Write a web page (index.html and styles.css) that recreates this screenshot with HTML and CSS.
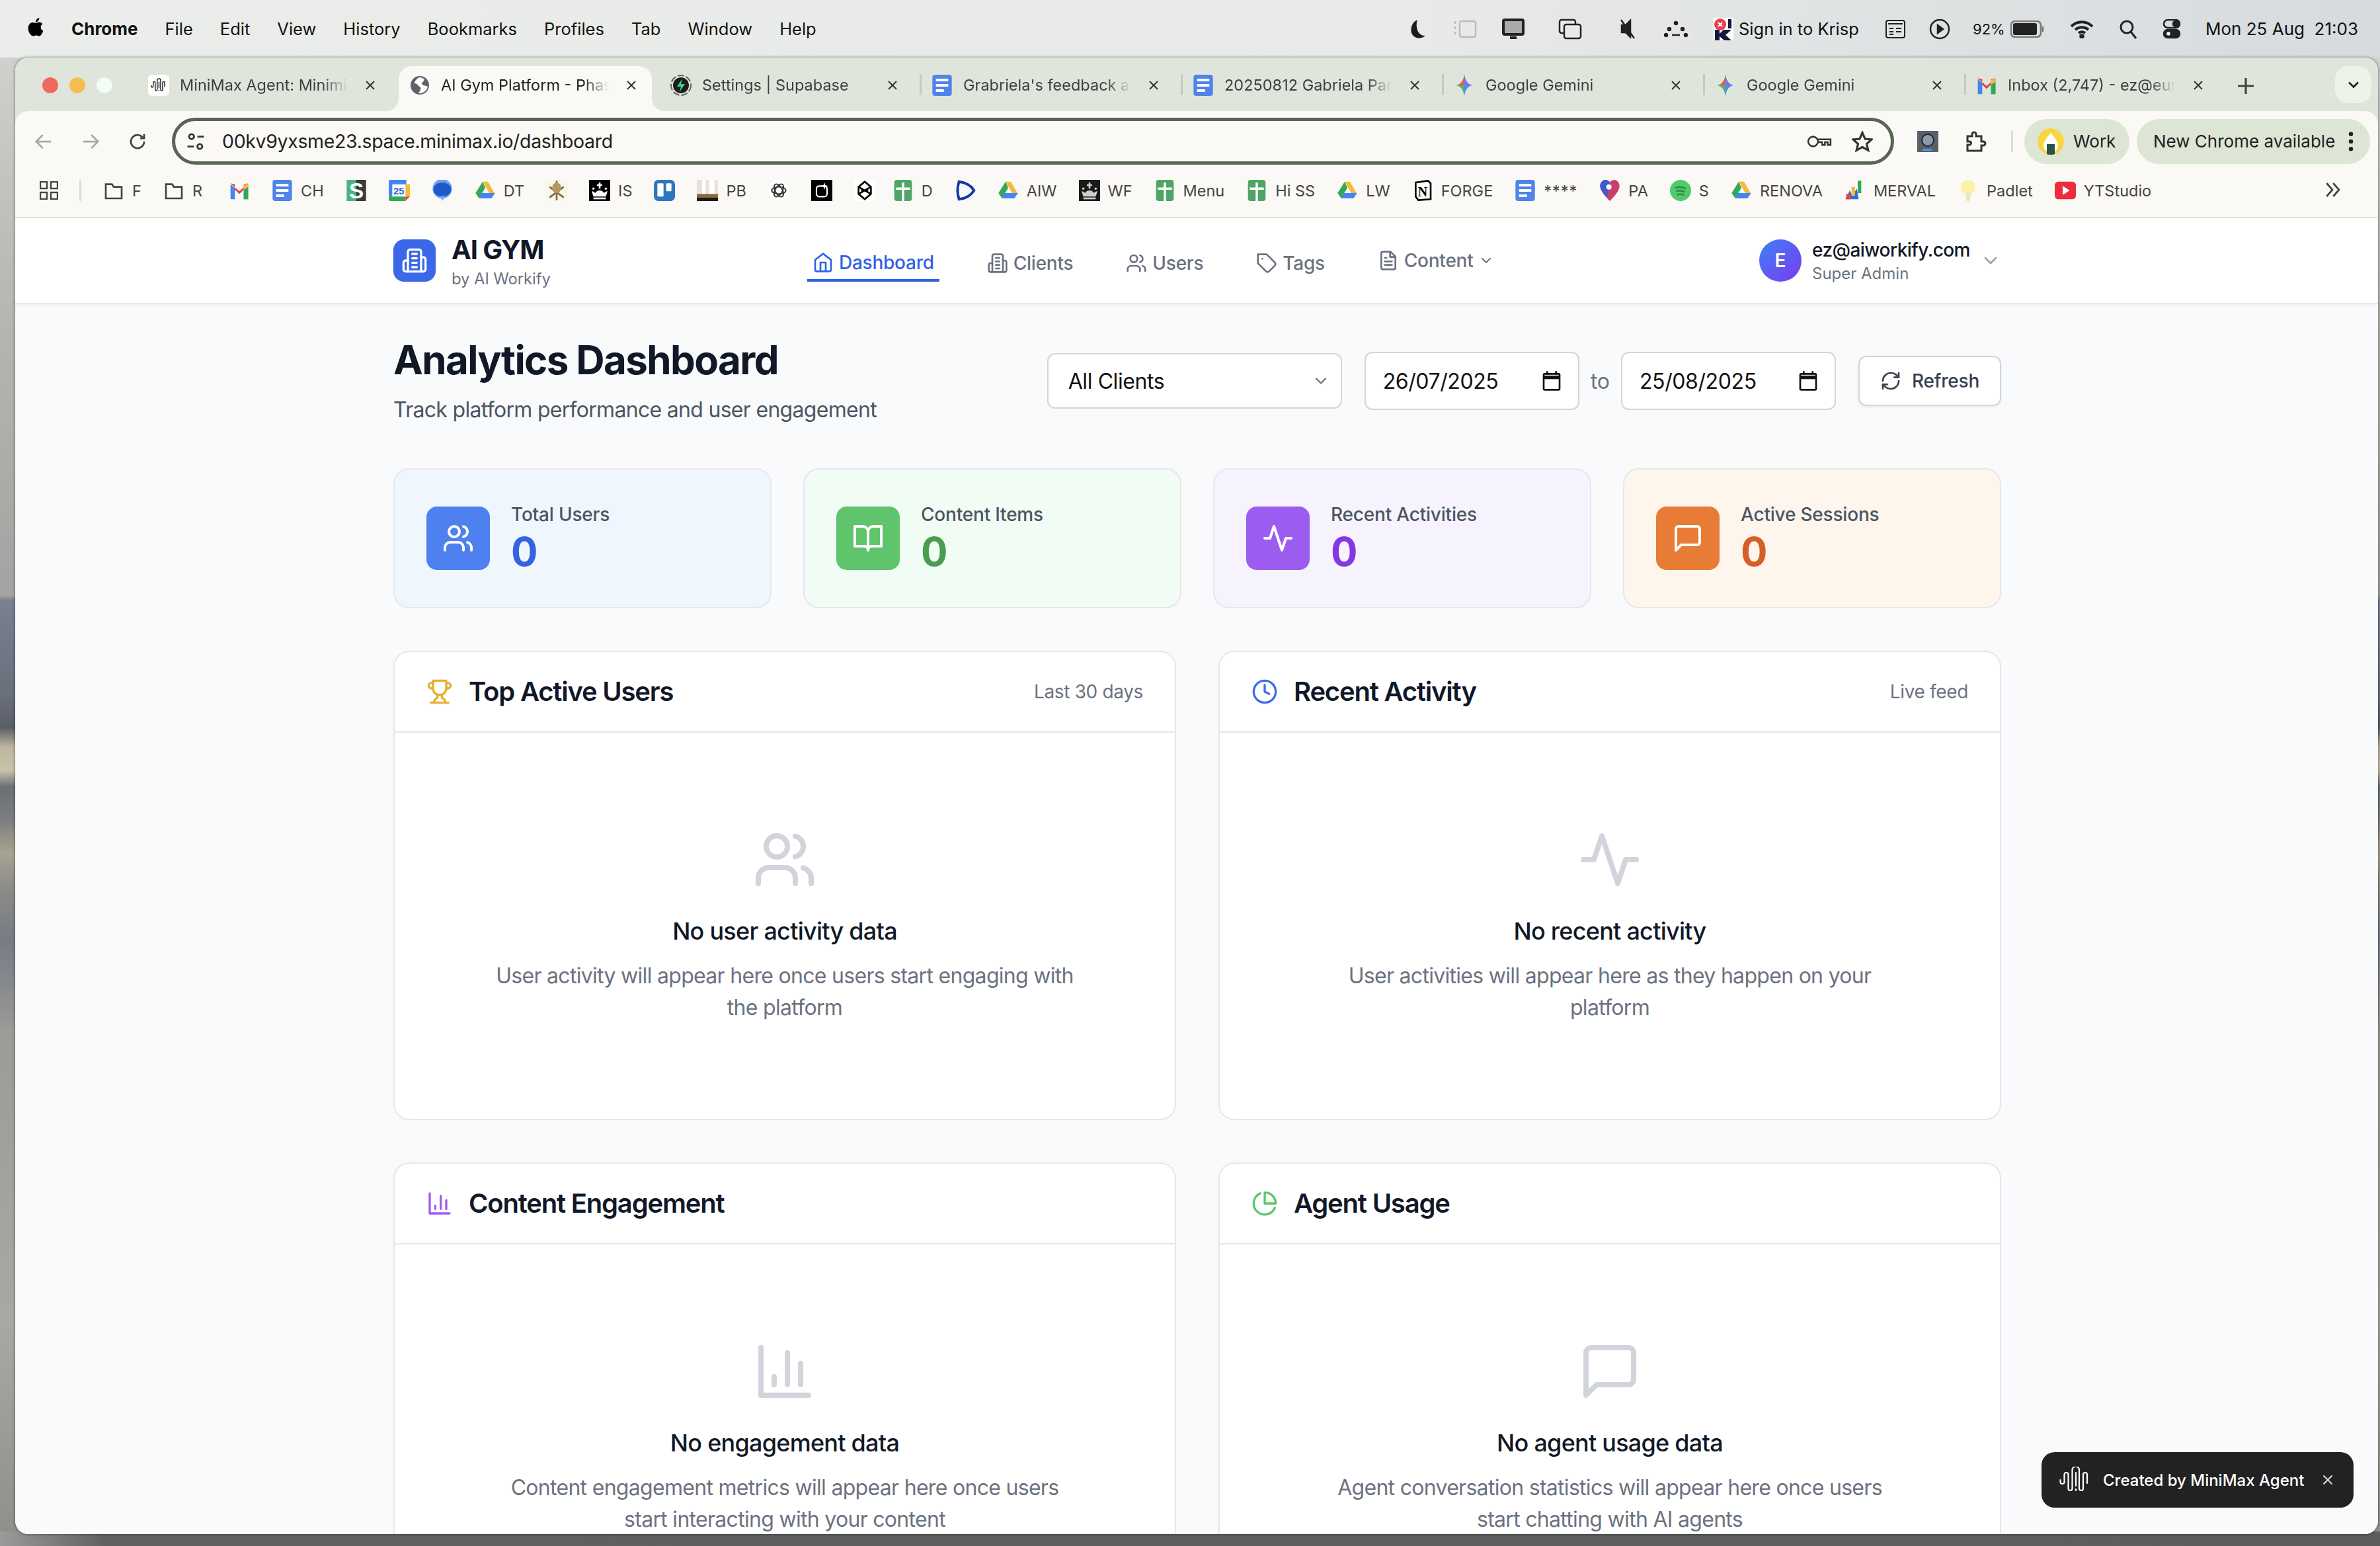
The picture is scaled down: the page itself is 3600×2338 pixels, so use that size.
FILE: index.html
```html
<!DOCTYPE html>
<html lang="en">
<head>
<meta charset="utf-8">
<title>AI Gym Platform</title>
<link rel="stylesheet" href="styles.css">
</head>
<body>
<svg class="sprite" width="0" height="0" aria-hidden="true">
  <defs>
    <g id="i-users"><path d="M16 21v-2a4 4 0 0 0-4-4H6a4 4 0 0 0-4 4v2"/><circle cx="9" cy="7" r="4"/><path d="M22 21v-2a4 4 0 0 0-3-3.87"/><path d="M16 3.13a4 4 0 0 1 0 7.75"/></g>
    <g id="i-book"><path d="M2 3h6a4 4 0 0 1 4 4v14a3 3 0 0 0-3-3H2z"/><path d="M22 3h-6a4 4 0 0 0-4 4v14a3 3 0 0 1 3-3h7z"/></g>
    <g id="i-activity"><path d="M22 12h-4l-3 9L9 3l-3 9H2"/></g>
    <g id="i-chat"><path d="M21 15a2 2 0 0 1-2 2H7l-4 4V5a2 2 0 0 1 2-2h14a2 2 0 0 1 2 2z"/></g>
    <g id="i-building"><path d="M6 22V4a2 2 0 0 1 2-2h8a2 2 0 0 1 2 2v18Z"/><path d="M6 12H4a2 2 0 0 0-2 2v6a2 2 0 0 0 2 2h2"/><path d="M18 9h2a2 2 0 0 1 2 2v9a2 2 0 0 1-2 2h-2"/><path d="M10 6h4M10 10h4M10 14h4M10 18h4"/></g>
    <g id="i-home"><path d="m3 9 9-7 9 7v11a2 2 0 0 1-2 2H5a2 2 0 0 1-2-2z"/><path d="M9 22V12h6v10"/></g>
    <g id="i-tag"><path d="M12 2H2v10l9.29 9.29c.94.94 2.48.94 3.42 0l6.58-6.58c.94-.94.94-2.48 0-3.42L12 2Z"/><path d="M7 7h.01"/></g>
    <g id="i-file"><path d="M14.5 2H6a2 2 0 0 0-2 2v16a2 2 0 0 0 2 2h12a2 2 0 0 0 2-2V7.5L14.5 2z"/><path d="M14 2v6h6"/><path d="M16 13H8M16 17H8M10 9H8"/></g>
    <g id="i-chev"><path d="m6 9 6 6 6-6"/></g>
    <g id="i-refresh"><path d="M3 12a9 9 0 0 1 9-9 9.75 9.75 0 0 1 6.74 2.74L21 8"/><path d="M21 3v5h-5"/><path d="M21 12a9 9 0 0 1-9 9 9.75 9.75 0 0 1-6.74-2.74L3 16"/><path d="M8 16H3v5"/></g>
    <g id="i-trophy"><path d="M6 9H4.5a2.5 2.5 0 0 1 0-5H6"/><path d="M18 9h1.5a2.5 2.5 0 0 0 0-5H18"/><path d="M4 22h16"/><path d="M10 14.66V17c0 .55-.47.98-.97 1.21C7.85 18.75 7 20.24 7 22"/><path d="M14 14.66V17c0 .55.47.98.97 1.21C16.15 18.75 17 20.24 17 22"/><path d="M18 2H6v7a6 6 0 0 0 12 0V2Z"/></g>
    <g id="i-clock"><circle cx="12" cy="12" r="10"/><path d="M12 6v6l4 2"/></g>
    <g id="i-bars"><path d="M3 3v18h18"/><path d="M18 17V9M13 17V5M8 17v-3"/></g>
    <g id="i-pie"><path d="M21.21 15.89A10 10 0 1 1 8 2.83"/><path d="M22 12A10 10 0 0 0 12 2v10z"/></g>
    <g id="i-x"><path d="M18 6 6 18M6 6l12 12"/></g>
    <g id="i-wave"><path d="M1.500 20v3a3 3 0 0 0 6 0V12a3 3 0 0 1 6 0v21a3 3 0 0 0 6 0V5a5.250 5.250 0 0 1 10.500 0v28a3 3 0 0 0 6 0V12a3 3 0 0 1 6 0v13"/><path d="M25 9v20M25 34v2"/></g>
    <g id="i-folder"><path d="M3 5h7l2 3h9v13H3z"/></g>
    <g id="b-docs"><rect x="1" y="0" width="22" height="24" rx="3" fill="#5083ec"/><path d="M5 6h14M5 12h14M5 18h9" stroke="#fff" stroke-width="3"/></g>
    <g id="b-sheet"><rect x="2" y="0" width="20" height="24" rx="3" fill="#4fa566"/><path d="M12 3v21M4 10h16" stroke="#fff" stroke-width="2.6"/></g>
    <g id="b-drive"><path d="M9 2h6l8 14h-6z" fill="#f6b93b"/><path d="M9 2l3 7-7 12-4-6z" fill="#34a853"/><path d="M5 21l3-6h15l-4 6z" fill="#4285f4"/></g>
    <g id="b-gmail"><path d="M2 5l10 8 10-8v17h-5V11l-5 5-5-5v11H2z" fill="#4285f4"/><path d="M7 11l5 5 5-5V5l5-1-10 9L2 4l5 1z" fill="#ea4335"/><path d="M17 11V6l5-2v5z" fill="#f6b93b"/><path d="M17 12l5-4v14h-5z" fill="#34a853"/></g>
    <g id="b-gem"><path d="M12 0c1 7 4 11 9 12-5 1-8 5-9 12-1-7-4-11-9-12 5-1 8-5 9-12z" fill="#4d8cf5"/><path d="M12 0c-1 7-4 11-9 12h9z" fill="#ea5a47"/><path d="M3 12c5 1 8 5 9 12V12z" fill="#53b66b"/><path d="M12 0c1 7 4 11 9 12h-9z" fill="#7a74f0"/></g>
    <g id="b-crown"><path d="M11 3h2v2h2v2h-2v3h-2V7H9V5h2z"/><circle cx="5" cy="10" r="1.300"/><circle cx="19" cy="10" r="1.300"/><path d="M3 13c2 0 3 1 4 2 1-2 3-3 5-3s4 1 5 3c1-1 2-2 4-2l-2 6H5z"/><rect x="5" y="20" width="14" height="2"/></g>
  </defs>
</svg>

<div class="menubar">
  <svg class="apple" viewBox="0 0 24 28"><path d="M17 1c0 3-2 5.500-5 6 0-3 2-5.500 5-6zM12.300 8c1.500 0 2.800-1 4.700-1 2 0 3.700 1 4.700 2.600-4 2.400-3.300 8 .8 9.600-1.200 3.400-3.400 7.300-5.700 7.300-1.600 0-2.200-1-4.100-1-2 0-2.600 1-4.100 1C5 26.500 1.500 20.500 1.500 15.500c0-4.800 3-8 6.300-8 1.800 0 3.200 1 4.500.5z"/></svg>
  <nav class="menus">
    <b>Chrome</b><span>File</span><span>Edit</span><span>View</span><span>History</span><span>Bookmarks</span><span>Profiles</span><span>Tab</span><span>Window</span><span>Help</span>
  </nav>
  <div class="tray">
    <svg class="t t-moon" viewBox="0 0 24 28"><path d="M13 1C3 5 1 20 9 25c5 3 11 2 15-2C15 25 9 12 13 1z"/></svg>
    <svg class="t t-side" viewBox="0 0 36 28"><rect x="10" y="2" width="24" height="24" rx="3"/><path d="M3 2v24" stroke-dasharray="4 4"/></svg>
    <svg class="t t-mon" viewBox="0 0 34 32"><rect x="2" y="2" width="30" height="22" rx="2"/><path d="M12 29h10"/></svg>
    <svg class="t t-copy" viewBox="0 0 36 32"><rect x="2" y="2" width="24" height="20" rx="3"/><rect x="9" y="9" width="25" height="21" rx="3"/></svg>
    <svg class="t t-mute" viewBox="0 0 28 32"><path d="M5 10h6l7-7v25l-7-7H5z" fill="#222"/><path d="M4 2l20 28"/></svg>
    <svg class="t t-dots" viewBox="0 0 36 26"><circle cx="18" cy="4" r="2" fill="#222"/><circle cx="8" cy="13" r="2" fill="#222"/><circle cx="28" cy="13" r="2" fill="#222"/><circle cx="3" cy="22" r="2" fill="#222"/><circle cx="33" cy="22" r="2" fill="#222"/><path d="M12 22h12"/></svg>
    <svg class="t t-krisp" viewBox="0 0 30 34"><rect width="30" height="34" fill="#fff"/><path d="M2 34V18h7v6l6-6h12l-9 8 9 8H16l-7-6v6z" fill="#12183a"/><circle cx="10" cy="10" r="9" fill="#e5404d"/><path d="M7 7l6 6M13 7l-6 6" stroke="#fff" stroke-width="2"/><path d="M22 2h5v14h-5z" fill="#12183a"/></svg>
    <span class="krisp">Sign in to Krisp</span>
    <svg class="t t-kbd" viewBox="0 0 30 28"><rect x="1" y="1" width="28" height="26" rx="3"/><path d="M4 6h22M6 13h6M6 18h6M6 22h6M16 13h8M16 18h8"/></svg>
    <svg class="t t-play" viewBox="0 0 32 32"><circle cx="16" cy="16" r="14"/><path d="M13 10l8 6-8 6z" fill="#222"/></svg>
    <span class="pct">92%</span>
    <svg class="t t-batt" viewBox="0 0 52 26"><rect x="1" y="1" width="45" height="24" rx="6" stroke="#777"/><rect x="4" y="4" width="36" height="18" rx="3" fill="#222" stroke="none"/><path d="M49 9v8" stroke="#777"/></svg>
    <svg class="t t-wifi" viewBox="0 0 38 28"><path d="M3 10c9-9 23-9 32 0M9 15c6-5 14-5 20 0M14 20c3-2 7-2 10 0" stroke-width="4"/><circle cx="19" cy="25" r="2.500" fill="#222"/></svg>
    <svg class="t t-search" viewBox="0 0 28 30"><circle cx="12" cy="12" r="9"/><path d="M18 19l8 10"/></svg>
    <svg class="t t-ctl" viewBox="0 0 28 30"><rect x="2" y="1" width="24" height="12" rx="6"/><circle cx="20" cy="7" r="4" fill="#222"/><rect x="2" y="16" width="24" height="12" rx="6" fill="#222"/><circle cx="9" cy="22" r="4" fill="#fff"/></svg>
    <span class="clock">Mon 25 Aug&nbsp; 21:03</span>
  </div>
</div>

<div class="window">
  <div class="tabbar">
    <div class="lights"><i class="red"></i><i class="amber"></i><i class="green"></i></div>
    <div class="tab lead"><svg class="tab-icon" viewBox="0 0 32 32"><rect width="32" height="32" rx="6" fill="#fff"/><use href="#i-wave" class="wave" transform="translate(4 6) scale(.5)"/></svg><span class="tab-text">MiniMax Agent: Minimi</span><svg class="tab-x" viewBox="0 0 24 24"><use href="#i-x"/></svg></div>
    <div class="tab lead active"><svg class="tab-icon" viewBox="0 0 32 32"><circle cx="16" cy="16" r="14" fill="#5f6368"/><path d="M15 4c-4 3-7 5-7 9 3 0 5 2 6 4 3 1 4 3 3 6l-3 5c7 1 13-4 14-10-3-2-7-1-9-4 0-3 3-3 4-7-2-2-5-3-8-3z" fill="#fff"/></svg><span class="tab-text">AI Gym Platform - Phase</span><svg class="tab-x" viewBox="0 0 24 24"><use href="#i-x"/></svg></div>
    <div class="tab"><svg class="tab-icon" viewBox="0 0 32 32"><circle cx="16" cy="16" r="15" fill="none" stroke="#5f6368" stroke-width="2" stroke-dasharray="10 3"/><circle cx="16" cy="16" r="12" fill="#1c1c1c"/><path d="M18 6l-8 12h6l-2 8 8-12h-6z" fill="#3ecf8e"/></svg><span class="tab-text">Settings | Supabase</span><svg class="tab-x" viewBox="0 0 24 24"><use href="#i-x"/></svg></div>
    <div class="tab sep"><svg class="tab-icon" viewBox="0 0 24 24"><use href="#b-docs"/></svg><span class="tab-text">Grabriela's feedback and</span><svg class="tab-x" viewBox="0 0 24 24"><use href="#i-x"/></svg></div>
    <div class="tab sep"><svg class="tab-icon" viewBox="0 0 24 24"><use href="#b-docs"/></svg><span class="tab-text">20250812 Gabriela Parra</span><svg class="tab-x" viewBox="0 0 24 24"><use href="#i-x"/></svg></div>
    <div class="tab sep"><svg class="tab-icon" viewBox="0 0 24 24"><use href="#b-gem"/></svg><span class="tab-text">Google Gemini</span><svg class="tab-x" viewBox="0 0 24 24"><use href="#i-x"/></svg></div>
    <div class="tab sep"><svg class="tab-icon" viewBox="0 0 24 24"><use href="#b-gem"/></svg><span class="tab-text">Google Gemini</span><svg class="tab-x" viewBox="0 0 24 24"><use href="#i-x"/></svg></div>
    <div class="tab sep"><svg class="tab-icon" viewBox="0 0 24 24"><use href="#b-gmail"/></svg><span class="tab-text">Inbox (2,747) - ez@euroa</span><svg class="tab-x" viewBox="0 0 24 24"><use href="#i-x"/></svg></div>
    <div class="tab-plus"><svg viewBox="0 0 24 24"><path d="M12 3v18M3 12h18"/></svg></div>
    <div class="tab-menu"><svg viewBox="0 0 24 24"><use href="#i-chev"/></svg></div>
  </div>

  <div class="toolbar">
    <svg class="nav-arrow dim" viewBox="0 0 24 24"><path d="M21 12H4M11 4l-8 8 8 8"/></svg>
    <svg class="nav-arrow dim" viewBox="0 0 24 24"><path d="M3 12h17M13 4l8 8-8 8"/></svg>
    <svg class="nav-arrow" viewBox="0 0 24 24"><path d="M20 12a8 8 0 1 1-3-6.200L20 8"/><path d="M20 3v5h-5"/></svg>
    <div class="omnibox">
      <svg class="tune" viewBox="0 0 24 24"><circle cx="7" cy="6" r="3"/><path d="M14 6h8M2 18h8"/><circle cx="17" cy="18" r="3"/></svg>
      <span class="url">00kv9yxsme23.space.minimax.io/dashboard</span>
      <svg class="omni-ic key" viewBox="0 0 36 24"><circle cx="9" cy="12" r="7"/><path d="M16 9h18v8h-4v-4h-4v4h-4v-4h-6"/></svg>
      <svg class="omni-ic star" viewBox="0 0 24 24"><path d="M12 2l3 7 7.500 .7-5.600 5 1.700 7.300L12 18.300 5.400 22l1.700-7.300-5.600-5L9 9z"/></svg>
    </div>
    <svg class="ext-photo" viewBox="0 0 32 32"><rect width="32" height="32" fill="#5a6068"/><circle cx="16" cy="14" r="9" fill="#8d99a8" stroke="#20262e" stroke-width="2"/><rect x="8" y="27" width="14" height="3" fill="#5b8def"/></svg>
    <svg class="ext-puzzle" viewBox="0 0 32 32"><path d="M3 8h7V5a3 3 0 0 1 6 0v3h8v8h3a3 3 0 0 1 0 6h-3v8H3v-9h3a2.500 2.500 0 0 0 0-5H3z"/></svg>
    <i class="tool-sep"></i>
    <div class="pill pill-work"><svg class="work-av" viewBox="0 0 40 40"><circle cx="20" cy="20" r="20" fill="#f9d53e"/><path d="M20 7c6 7 11 13 11 19a11 11 0 0 1-22 0C9 20 14 14 20 7z" fill="#fff"/><rect x="14" y="24" width="12" height="16" fill="#24544a"/></svg><span>Work</span></div>
    <div class="pill pill-new"><span>New Chrome available</span><svg class="kebab" viewBox="0 0 6 24"><circle cx="3" cy="3" r="2.600"/><circle cx="3" cy="12" r="2.600"/><circle cx="3" cy="21" r="2.600"/></svg></div>
  </div>

  <div class="bookmarks">
    <svg class="apps" viewBox="0 0 28 28"><rect x="1" y="1" width="10" height="10"/><rect x="17" y="1" width="10" height="10"/><rect x="1" y="17" width="10" height="10"/><rect x="17" y="17" width="10" height="10"/></svg>
    <i class="bm-sep"></i>
    <div class="bm"><svg class="folder" viewBox="0 0 24 24"><use href="#i-folder"/></svg><span>F</span></div>
    <div class="bm"><svg class="folder" viewBox="0 0 24 24"><use href="#i-folder"/></svg><span>R</span></div>
    <div class="bm bm-wide"><svg viewBox="0 0 24 24"><use href="#b-gmail"/></svg></div>
    <div class="bm"><svg viewBox="0 0 24 24"><use href="#b-docs"/></svg><span>CH</span></div>
    <div class="bm"><svg viewBox="0 0 24 24"><rect x="1" width="11" height="24" fill="#4cb08a"/><rect x="12" width="11" height="24" fill="#3a3a3a"/><text x="12" y="21" class="svg-s">S</text></svg></div>
    <div class="bm"><svg viewBox="0 0 24 24"><rect width="24" height="24" rx="2" fill="#fff"/><path d="M0 2a2 2 0 0 1 2-2h18v5H4v14H0z" fill="#4285f4"/><path d="M19 5h5v14h-5z" fill="#f6b93b"/><path d="M0 19h19v5H2a2 2 0 0 1-2-2z" fill="#34a853"/><path d="M19 19h5l-5 5z" fill="#ea4335"/><text x="11.500" y="16.500" class="svg-cal">25</text></svg></div>
    <div class="bm"><svg viewBox="0 0 24 24"><circle cx="12" cy="10" r="11" fill="#6f9cf5"/><ellipse cx="12" cy="11" rx="10" ry="8" fill="#1f58c8"/><path d="M10 18h5l-3 6z" fill="#6f9cf5"/></svg></div>
    <div class="bm"><svg viewBox="0 0 24 24"><use href="#b-drive"/></svg><span>DT</span></div>
    <div class="bm"><svg viewBox="0 0 24 24"><rect width="24" height="24" fill="#f8f5ea"/><path d="M12 1v22M4 8l16 12M20 8L4 20" stroke="#7d6a3c" stroke-width="2"/><ellipse cx="12" cy="9" rx="5" ry="6" fill="#b39a5e"/></svg></div>
    <div class="bm"><svg viewBox="0 0 24 24"><rect width="24" height="24" fill="#000"/><use href="#b-crown" fill="#fff"/></svg><span>IS</span></div>
    <div class="bm"><svg viewBox="0 0 24 24"><rect width="24" height="24" rx="5" fill="#2f77bd"/><rect x="4" y="4" width="7" height="15" rx="1" fill="#fff"/><rect x="14" y="4" width="6" height="9" rx="1" fill="#fff"/></svg></div>
    <div class="bm"><svg viewBox="0 0 24 24"><rect width="24" height="24" fill="#e7e2de"/><rect x="6" y="0" width="4" height="16" fill="#fff"/><rect x="14" y="0" width="6" height="16" fill="#fff"/><rect y="16" width="24" height="4" fill="#8b6a34"/><rect y="20" width="24" height="4" fill="#1b1b1b"/></svg><span>PB</span></div>
    <div class="bm"><svg viewBox="0 0 24 24"><circle cx="12" cy="12" r="12" fill="#fff"/><g class="openai"><ellipse cx="12" cy="12" rx="8" ry="4"/><ellipse cx="12" cy="12" rx="8" ry="4" transform="rotate(60 12 12)"/><ellipse cx="12" cy="12" rx="8" ry="4" transform="rotate(120 12 12)"/></g></svg></div>
    <div class="bm"><svg viewBox="0 0 24 24"><rect width="24" height="24" fill="#000"/><rect x="6" y="7" width="12" height="12" rx="3" fill="none" stroke="#fff" stroke-width="1.600"/><path d="M15 3l1 3 3 1-3 1-1 3-1-3-3-1 3-1z" fill="#fff"/></svg></div>
    <div class="bm"><svg viewBox="0 0 24 24"><rect width="24" height="24" fill="#fff"/><path d="M12 2l7 6v8l-7 6-7-6V8zM5 8l14 8M19 8L5 16M8 12h8" fill="none" stroke="#000" stroke-width="2"/></svg></div>
    <div class="bm bm-narrow"><svg viewBox="0 0 24 24"><use href="#b-sheet"/></svg><span>D</span></div>
    <div class="bm"><svg viewBox="0 0 24 24"><path d="M5 2c8 1 14 5 17 10-3 5-9 9-17 10-2-6-2-14 0-20z" fill="none" stroke="#123aa5" stroke-width="3"/></svg></div>
    <div class="bm"><svg viewBox="0 0 24 24"><use href="#b-drive"/></svg><span>AIW</span></div>
    <div class="bm"><svg viewBox="0 0 24 24"><rect width="24" height="24" fill="#1a1a1a"/><use href="#b-crown" fill="#cfcfcf"/></svg><span>WF</span></div>
    <div class="bm"><svg viewBox="0 0 24 24"><use href="#b-sheet"/></svg><span>Menu</span></div>
    <div class="bm"><svg viewBox="0 0 24 24"><use href="#b-sheet"/></svg><span>Hi SS</span></div>
    <div class="bm"><svg viewBox="0 0 24 24"><use href="#b-drive"/></svg><span>LW</span></div>
    <div class="bm"><svg viewBox="0 0 24 24"><path d="M4 3l14-2 3 3v18l-14 1-3-4z" fill="#fff" stroke="#000" stroke-width="2"/><text x="12" y="19" class="svg-n">N</text></svg><span>FORGE</span></div>
    <div class="bm"><svg viewBox="0 0 24 24"><use href="#b-docs"/></svg><span class="stars">****</span></div>
    <div class="bm"><svg viewBox="0 0 24 24"><path d="M12 24C6 18 1 12 1 7c0-4 3-7 6-7 2 0 4 1 5 3 1-2 3-3 5-3 3 0 6 3 6 7 0 5-5 11-11 17z" fill="#cc3e6a"/><path d="M1 7c0-4 3-7 6-7 2 0 4 1 5 3L9 20C5 16 1 11 1 7z" fill="#3f5bd0"/><circle cx="11" cy="8" r="3" fill="#fff"/></svg><span>PA</span></div>
    <div class="bm"><svg viewBox="0 0 24 24"><circle cx="12" cy="12" r="12" fill="#52c96b"/><path d="M6 9c4-1 8-1 12 1M7 13c3-1 7-1 10 1M8 17c3-1 5-1 8 0" fill="none" stroke="#2f8a45" stroke-width="2"/></svg><span>S</span></div>
    <div class="bm"><svg viewBox="0 0 24 24"><use href="#b-drive"/></svg><span>RENOVA</span></div>
    <div class="bm"><svg viewBox="0 0 24 24"><path d="M1 22l5-10 3 6 5-8 2 12z" fill="#2f6ce0"/><path d="M15 1h4v14h-4z" fill="#34a853"/><path d="M8 8h4v10H8z" fill="#f6b93b"/><path d="M2 16h5v6H2z" fill="#ea4335"/></svg><span>MERVAL</span></div>
    <div class="bm"><svg viewBox="0 0 24 24"><ellipse cx="12" cy="8" rx="8" ry="8" fill="#fbf3a1"/><path d="M9 14h6l-1 10h-4z" fill="#e9e6c8"/></svg><span>Padlet</span></div>
    <div class="bm"><svg viewBox="0 0 24 24"><rect y="2" width="24" height="20" rx="4" fill="#ee2d3c"/><path d="M9 7l8 5-8 5z" fill="#fff"/></svg><span>YTStudio</span></div>
    <svg class="more" viewBox="0 0 24 24"><path d="M5 4l7 8-7 8M13 4l7 8-7 8"/></svg>
  </div>

  <div class="page">
    <header class="topnav">
      <div class="topnav-in">
        <div class="brand">
          <span class="logo"><svg class="ic" viewBox="0 0 24 24"><use href="#i-building"/></svg></span>
          <div class="brand-text"><strong>AI GYM</strong><small>by AI Workify</small></div>
        </div>
        <nav class="links">
          <a class="link on"><svg class="ic" viewBox="0 0 24 24"><use href="#i-home"/></svg>Dashboard</a>
          <a class="link"><svg class="ic" viewBox="0 0 24 24"><use href="#i-building"/></svg>Clients</a>
          <a class="link"><svg class="ic" viewBox="0 0 24 24"><use href="#i-users"/></svg>Users</a>
          <a class="link"><svg class="ic" viewBox="0 0 24 24"><use href="#i-tag"/></svg>Tags</a>
          <a class="link up"><svg class="ic" viewBox="0 0 24 24"><use href="#i-file"/></svg>Content<svg class="ic chev" viewBox="0 0 24 24"><use href="#i-chev"/></svg></a>
        </nav>
        <div class="user">
          <span class="avatar">E</span>
          <div class="user-text"><b>ez@aiworkify.com</b><small>Super Admin</small></div>
          <svg class="ic user-chev" viewBox="0 0 24 24"><use href="#i-chev"/></svg>
        </div>
      </div>
    </header>

    <main class="main">
      <section class="head">
        <div>
          <h1>Analytics Dashboard</h1>
          <p>Track platform performance and user engagement</p>
        </div>
        <div class="filters">
          <div class="field select"><span>All Clients</span><svg class="ic" viewBox="0 0 24 24"><use href="#i-chev"/></svg></div>
          <div class="date-group">
            <div class="field date"><span>26/07/2025</span><svg class="cal" viewBox="0 0 24 24"><path d="M7 1v4M17 1v4"/><rect x="3" y="4" width="18" height="18" rx="1"/><path d="M3 8h18" stroke-width="4"/></svg></div>
            <span class="to">to</span>
            <div class="field date"><span>25/08/2025</span><svg class="cal" viewBox="0 0 24 24"><path d="M7 1v4M17 1v4"/><rect x="3" y="4" width="18" height="18" rx="1"/><path d="M3 8h18" stroke-width="4"/></svg></div>
          </div>
          <div class="refresh"><svg class="ic" viewBox="0 0 24 24"><use href="#i-refresh"/></svg>Refresh</div>
        </div>
      </section>

      <section class="stats">
        <article class="stat blue"><span class="stat-ic"><svg class="ic" viewBox="0 0 24 24"><use href="#i-users"/></svg></span><div><h3>Total Users</h3><b>0</b></div></article>
        <article class="stat green"><span class="stat-ic"><svg class="ic" viewBox="0 0 24 24"><use href="#i-book"/></svg></span><div><h3>Content Items</h3><b>0</b></div></article>
        <article class="stat purple"><span class="stat-ic"><svg class="ic" viewBox="0 0 24 24"><use href="#i-activity"/></svg></span><div><h3>Recent Activities</h3><b>0</b></div></article>
        <article class="stat orange"><span class="stat-ic"><svg class="ic" viewBox="0 0 24 24"><use href="#i-chat"/></svg></span><div><h3>Active Sessions</h3><b>0</b></div></article>
      </section>

      <section class="panels">
        <article class="panel">
          <div class="panel-head"><svg class="ic p-ic c-gold" viewBox="0 0 24 24"><use href="#i-trophy"/></svg><h2>Top Active Users</h2><span>Last 30 days</span></div>
          <div class="empty"><svg class="ic" viewBox="0 0 24 24"><use href="#i-users"/></svg><h4>No user activity data</h4><p>User activity will appear here once users start engaging with the platform</p></div>
        </article>
        <article class="panel">
          <div class="panel-head"><svg class="ic p-ic c-blue" viewBox="0 0 24 24"><use href="#i-clock"/></svg><h2>Recent Activity</h2><span>Live feed</span></div>
          <div class="empty"><svg class="ic" viewBox="0 0 24 24"><use href="#i-activity"/></svg><h4>No recent activity</h4><p>User activities will appear here as they happen on your platform</p></div>
        </article>
        <article class="panel">
          <div class="panel-head"><svg class="ic p-ic c-purple" viewBox="0 0 24 24"><use href="#i-bars"/></svg><h2>Content Engagement</h2></div>
          <div class="empty"><svg class="ic" viewBox="0 0 24 24"><use href="#i-bars"/></svg><h4>No engagement data</h4><p>Content engagement metrics will appear here once users start interacting with your content</p></div>
        </article>
        <article class="panel">
          <div class="panel-head"><svg class="ic p-ic c-green" viewBox="0 0 24 24"><use href="#i-pie"/></svg><h2>Agent Usage</h2></div>
          <div class="empty"><svg class="ic" viewBox="0 0 24 24"><use href="#i-chat"/></svg><h4>No agent usage data</h4><p>Agent conversation statistics will appear here once users start chatting with AI agents</p></div>
        </article>
      </section>
    </main>

    <div class="toast"><svg class="ic toast-wave" viewBox="0 0 48 40"><use href="#i-wave"/></svg><span>Created by MiniMax Agent</span><svg class="ic toast-x" viewBox="0 0 24 24"><use href="#i-x"/></svg></div>
  </div>
</div>
</body>
</html>
```
FILE: styles.css
```css
* { box-sizing: border-box; }
html, body { margin: 0; height: 100%; }
body {
  width: 3600px;
  height: 2338px;
  overflow: hidden;
  font-family: Inter, "Liberation Sans", sans-serif;
  background:
    linear-gradient(90deg, #9a9c9a 0, #5f615f 160px, #5c5e5c 100%) no-repeat 0 2316px / 100% 22px,
    linear-gradient(180deg, #cfd1cf 87px, #bdbeb9 354px, #b3b3ae 550px, #a3a4a2 900px, #7b8090 908px, #6a6f7c 1050px, #5a5e66 1100px, #bfb79e 1130px, #c8c2aa 1165px, #6c7074 1190px, #7c7e7e 1240px, #a8a491 1290px, #8d8d88 1340px, #777b86 1420px, #8a8c8f 1500px, #9b9c97 1560px, #a8a9a3 2000px, #8e908c 2320px);
}
.sprite { position: absolute; }
.ic { fill: none; stroke: currentColor; stroke-width: 2; stroke-linecap: round; stroke-linejoin: round; display: block; flex: none; }

/* macOS menu bar */
.menubar { height: 87px; display: flex; align-items: center; background: linear-gradient(90deg, #ebedea, #e8eae8 60%, #d6dbde); color: #111; font-size: 25.500px; position: relative; }
.apple { width: 26px; height: 32px; margin-left: 41px; margin-top: -6px; fill: #000; flex: none; }
.menus { display: flex; gap: 41px; margin-left: 41px; width: 1127px; flex: none; }
.menus b { font-size: 26px; font-weight: 700; }
.tray { display: flex; align-items: center; margin-left: 895px; flex: none; }
.t { display: block; flex: none; fill: none; stroke: #222; stroke-width: 2.500; }
.t-moon { width: 26px; height: 30px; fill: #1c1c1c; stroke: none; }
.t-side { width: 36px; height: 28px; margin-left: 42px; stroke: #bbb; }
.t-mon { width: 34px; height: 32px; margin-left: 38px; fill: #aaa; stroke-width: 4; }
.t-copy { width: 36px; height: 32px; margin-left: 51px; fill: #e8eae8; }
.t-mute { width: 28px; height: 32px; margin-left: 55px; }
.t-dots { width: 36px; height: 26px; margin-left: 41px; stroke: #222; }
.t-krisp { width: 30px; height: 34px; margin-left: 39px; stroke: none; }
.krisp { margin-left: 8px; width: 180px; white-space: nowrap; }
.t-kbd { width: 30px; height: 28px; margin-left: 42px; stroke-width: 2; }
.t-play { width: 32px; height: 32px; margin-left: 36px; }
.pct { margin-left: 34px; font-size: 22px; width: 47px; }
.t-batt { width: 52px; height: 26px; margin-left: 10px; }
.t-wifi { width: 38px; height: 28px; margin-left: 37px; }
.t-search { width: 28px; height: 30px; margin-left: 37px; stroke-width: 3; }
.t-ctl { width: 28px; height: 30px; margin-left: 38px; }
.clock { margin-left: 37px; font-size: 26px; white-space: nowrap; }

/* Chrome window */
.window { position: relative; margin: 0 3px 0 23px; height: 2233px; border-radius: 20px; overflow: hidden; background: #dfe5da; box-shadow: 0 0 4px rgba(0,0,0,.5); }
.tabbar { height: 81px; background: #dfe5da; display: flex; align-items: flex-end; color: #3c4043; font-size: 23.500px; position: relative; }
.lights { display: flex; gap: 17px; margin-left: 41px; width: 144px; align-self: flex-start; margin-top: 30px; flex: none; }
.lights i { width: 24px; height: 24px; border-radius: 50%; display: block; }
.red { background: #ee6a5f; }
.amber { background: #f5bd4f; }
.green { background: #61c454; }
.tab { width: 395px; height: 68px; flex: none; display: flex; align-items: flex-start; padding: 13px 0 0 18px; position: relative; }
.tab.lead { padding-left: 16px; }
.tab.active { background: #faf9f5; border-radius: 20px 20px 0 0; width: 383px; margin-right: 10px; color: #1f1f1f; }
.tab.active::before, .tab.active::after { content: ""; position: absolute; bottom: 0; width: 20px; height: 20px; }
.tab.active::before { left: -20px; background: radial-gradient(circle at 0 0, transparent 20px, #faf9f5 20.500px); }
.tab.active::after { right: -20px; background: radial-gradient(circle at 100% 0, transparent 20px, #faf9f5 20.500px); }
.tab.sep::before { content: ""; position: absolute; left: 0; top: 12px; width: 3px; height: 32px; background: #c3cbbc; }
.tab-icon { width: 32px; height: 32px; flex: none; }
.wave { fill: none; stroke: #222; stroke-width: 3; }
.tab-text { margin-left: 16px; width: 254px; height: 32px; line-height: 32px; overflow: hidden; white-space: nowrap; -webkit-mask-image: linear-gradient(90deg, #000 85%, transparent); mask-image: linear-gradient(90deg, #000 85%, transparent); }
.tab-x { width: 24px; height: 24px; margin: 4px 0 0 22px; fill: none; stroke: #333; stroke-width: 2; flex: none; }
.tab-plus { width: 32px; height: 32px; margin: 0 0 22px 15px; flex: none; }
.tab-plus svg { display: block; fill: none; stroke: #444; stroke-width: 2.400; }
.tab-menu { position: absolute; right: 10px; top: 13px; width: 55px; height: 56px; border-radius: 20px; background: #eef3e8; display: flex; align-items: center; justify-content: center; }
.tab-menu svg { width: 28px; height: 28px; fill: none; stroke: #222; stroke-width: 2.400; }

.toolbar { height: 84px; background: #faf9f5; display: flex; align-items: center; padding: 7px 0 0 28px; border-radius: 20px 20px 0 0; position: relative; }
.nav-arrow { width: 30px; height: 30px; fill: none; stroke: #444; stroke-width: 2.200; flex: none; margin-right: 41px; }
.nav-arrow.dim { stroke: #a8a8a6; }
.omnibox { width: 2605px; height: 71px; border: 5px solid #5a6453; border-radius: 36px; display: flex; align-items: center; margin-left: -4px; padding-left: 16px; flex: none; }
.tune { width: 30px; height: 30px; fill: none; stroke: #333; stroke-width: 2.200; flex: none; }
.url { margin-left: 25px; font-size: 28.500px; letter-spacing: -.35px; color: #1f1f1f; white-space: nowrap; }
.key { width: 38px; height: 26px; margin-left: auto; }
.omni-ic { fill: none; stroke: #333; stroke-width: 2.400; flex: none; }
.star { width: 32px; height: 32px; margin: 0 27px 0 30px; }
.ext-photo { width: 32px; height: 32px; margin-left: 35px; flex: none; }
.ext-puzzle { width: 32px; height: 32px; margin-left: 41px; flex: none; fill: none; stroke: #333; stroke-width: 3; }
.tool-sep { width: 3px; height: 32px; background: #d8ddd2; margin-left: 37px; flex: none; }
.pill { height: 68px; border-radius: 34px; background: #dde5d5; display: flex; align-items: center; font-size: 26px; color: #1f1f1f; flex: none; }
.pill-work { width: 159px; margin-left: 17px; padding-left: 20px; gap: 14px; }
.work-av { width: 40px; height: 40px; border-radius: 50%; }
.pill-new { width: 353px; margin-left: 11px; padding-left: 25px; gap: 20px; white-space: nowrap; }
.kebab { width: 8px; height: 30px; fill: #222; }

.bookmarks { height: 78px; background: #faf9f5; display: flex; align-items: center; padding: 0 0 4px 37px; gap: 33px; color: #444; font-size: 23.500px; border-bottom: 2px solid #e4e3df; position: relative; }
.apps { width: 28px; height: 28px; fill: none; stroke: #444; stroke-width: 2.400; flex: none; }
.bm-sep { width: 3px; height: 32px; background: #d7dfd1; margin-left: -1px; flex: none; }
.bm { display: flex; align-items: center; gap: 12px; flex: none; white-space: nowrap; }
.bm-wide { margin-left: 7px; }
.bm-narrow { margin-left: -7px; }
.bm svg { width: 32px; height: 32px; flex: none; }
.folder { fill: none; stroke: #444; stroke-width: 2; }
.stars { letter-spacing: 1px; }
.svg-s { font: 700 25px "Liberation Sans", sans-serif; fill: #fff; text-anchor: middle; }
.svg-cal { font: 700 11px "Liberation Sans", sans-serif; fill: #3367d6; text-anchor: middle; }
.svg-n { font: 700 15px "Liberation Serif", serif; fill: #000; text-anchor: middle; }
.openai { fill: none; stroke: #333; stroke-width: 1.400; }
.more { position: absolute; left: 3490px; top: 20px; width: 30px; height: 30px; fill: none; stroke: #444; stroke-width: 2.200; }

/* App page */
.page { position: relative; height: 1990px; overflow: hidden; background: #f9fafb; }
.topnav { height: 130px; padding-left: 2px; background: #fff; border-bottom: 2px solid #e5e7eb; box-shadow: 0 2px 4px rgba(0,0,0,.05); }
.topnav-in { width: 2432px; height: 128px; margin: 0 auto; display: flex; align-items: center; }
.brand { display: flex; align-items: center; gap: 24px; flex: none; width: 268px; }
.logo { width: 64px; height: 64px; border-radius: 16px; background: #3b68e8; color: #fff; display: flex; align-items: center; justify-content: center; flex: none; }
.logo svg { width: 40px; height: 40px; }
.brand-text { padding-top: 3px; }
.brand-text strong { display: block; font-size: 40px; line-height: 50px; font-weight: 700; letter-spacing: -1.100px; color: #111827; white-space: nowrap; }
.brand-text small { display: block; margin-top: 3px; font-size: 24px; line-height: 32px; letter-spacing: -.15px; color: #6b7280; white-space: nowrap; }
.links { display: flex; align-items: flex-end; gap: 64px; margin-left: 358px; height: 60px; margin-top: 4px; }
.link { display: flex; align-items: center; gap: 8px; padding: 0 8px 4px; height: 52px; font-size: 28px; font-weight: 500; letter-spacing: -.25px; color: #6b7280; white-space: nowrap; }
.link svg { width: 32px; height: 32px; }
.link.on { color: #2f62e4; border-bottom: 4px solid #2f62e4; padding-bottom: 2px; height: 52px; }
.link.up { transform: translateY(-4px); }
.link .chev { width: 24px; height: 24px; }
.user { display: flex; align-items: center; margin-left: auto; flex: none; }
.avatar { width: 64px; height: 64px; border-radius: 50%; background: linear-gradient(135deg, #3b82f6, #7c3aed); color: #fff; font-size: 28px; font-weight: 600; display: flex; align-items: center; justify-content: center; }
.user-text { margin-left: 16px; width: 254px; }
.user-text b { display: block; font-size: 28px; line-height: 40px; font-weight: 500; letter-spacing: -.55px; color: #111827; white-space: nowrap; }
.user-text small { display: block; font-size: 24px; line-height: 32px; color: #6b7280; }
.user-chev { width: 32px; height: 32px; color: #9ca3af; }

.main { width: 2434px; padding: 48px 0 0 2px; margin: 0 auto; }
.head { display: flex; justify-content: space-between; align-items: center; }
h1 { margin: 0; font-size: 60px; line-height: 72px; font-weight: 700; color: #111827; letter-spacing: -1.600px; }
.head p { margin: 16px 0 0; font-size: 32px; line-height: 48px; letter-spacing: -.7px; color: #4b5563; }
.filters { display: flex; align-items: center; gap: 34px; }
.field { background: #fff; border: 2px solid #d1d5db; border-radius: 12px; display: flex; align-items: center; justify-content: space-between; font-size: 32px; letter-spacing: -.4px; color: #111; }
.select { width: 446px; height: 84px; padding: 0 16px 0 30px; }
.select svg { width: 28px; height: 28px; color: #6b7280; }
.date-group { display: flex; align-items: center; gap: 17px; }
.date { width: 325px; height: 88px; padding: 0 24px 0 26px; }
.cal { width: 32px; height: 32px; fill: none; stroke: #111; stroke-width: 2; }
.to { font-size: 32px; color: #6b7280; }
.refresh { width: 216px; height: 76px; background: #fff; border: 2px solid #d1d5db; border-radius: 12px; box-shadow: 0 2px 4px rgba(0,0,0,.06); display: flex; align-items: center; justify-content: center; gap: 16px; font-size: 28px; font-weight: 500; letter-spacing: -.2px; color: #374151; }
.refresh svg { width: 32px; height: 32px; }

.stats { display: grid; grid-template-columns: repeat(4, 1fr); gap: 48px; margin-top: 64px; }
.stat { height: 212px; border: 2px solid #e5e7eb; border-radius: 24px; padding: 48px; display: flex; align-items: center; gap: 32px; }
.stat-ic { width: 96px; height: 96px; border-radius: 16px; color: #fff; display: flex; align-items: center; justify-content: center; flex: none; }
.stat-ic svg { width: 48px; height: 48px; }
.stat h3 { margin: 0; font-size: 28px; line-height: 40px; font-weight: 500; letter-spacing: -.2px; color: #4b5563; }
.stat b { display: block; font-size: 60px; line-height: 72px; font-weight: 700; }
.blue { background: #eff6fe; } .blue .stat-ic { background: #4f80f0; } .blue b { color: #3563e0; }
.green { background: #f1fcf4; } .green .stat-ic { background: #5fc46c; } .green b { color: #4a9c50; }
.purple { background: #f6f3fe; } .purple .stat-ic { background: #9d5cf0; } .purple b { color: #8338e0; }
.orange { background: #fef6ed; } .orange .stat-ic { background: #e87c36; } .orange b { color: #d65f28; }

.panels { display: grid; grid-template-columns: 1fr 1fr; gap: 64px; margin-top: 64px; }
.panel { height: 710px; background: #fff; border: 2px solid #e5e7eb; border-radius: 24px; }
.panel-head { height: 122px; border-bottom: 2px solid #e5e7eb; padding: 0 48px; display: flex; align-items: center; gap: 24px; }
.p-ic { width: 40px; height: 40px; }
.c-gold { color: #e6b02f; } .c-blue { color: #3b6fe8; } .c-purple { color: #a05cf2; } .c-green { color: #5fc46c; }
h2 { margin: 0; font-size: 40px; line-height: 56px; font-weight: 600; letter-spacing: -1.200px; color: #111827; flex: 1; }
.panel-head span { font-size: 28px; letter-spacing: -.35px; color: #6b7280; }
.empty { padding-top: 144px; display: flex; flex-direction: column; align-items: center; text-align: center; }
.empty svg { width: 96px; height: 96px; color: #d1d5db; }
h4 { margin: 32px 0 16px; font-size: 36px; line-height: 56px; font-weight: 500; letter-spacing: -.75px; color: #111827; }
.empty p { margin: 0; width: 896px; font-size: 32px; line-height: 48px; letter-spacing: -.7px; color: #6b7280; }

.toast { position: absolute; right: 37px; top: 1866px; width: 472px; height: 84px; border-radius: 20px; background: #222; color: #fff; display: flex; align-items: center; padding-left: 27px; font-size: 24px; font-weight: 500; white-space: nowrap; }
.toast-wave { width: 48px; height: 40px; stroke-width: 2.200; }
.toast span { margin-left: 18px; }
.toast-x { width: 24px; height: 24px; margin-left: 24px; color: #ddd; }
```
